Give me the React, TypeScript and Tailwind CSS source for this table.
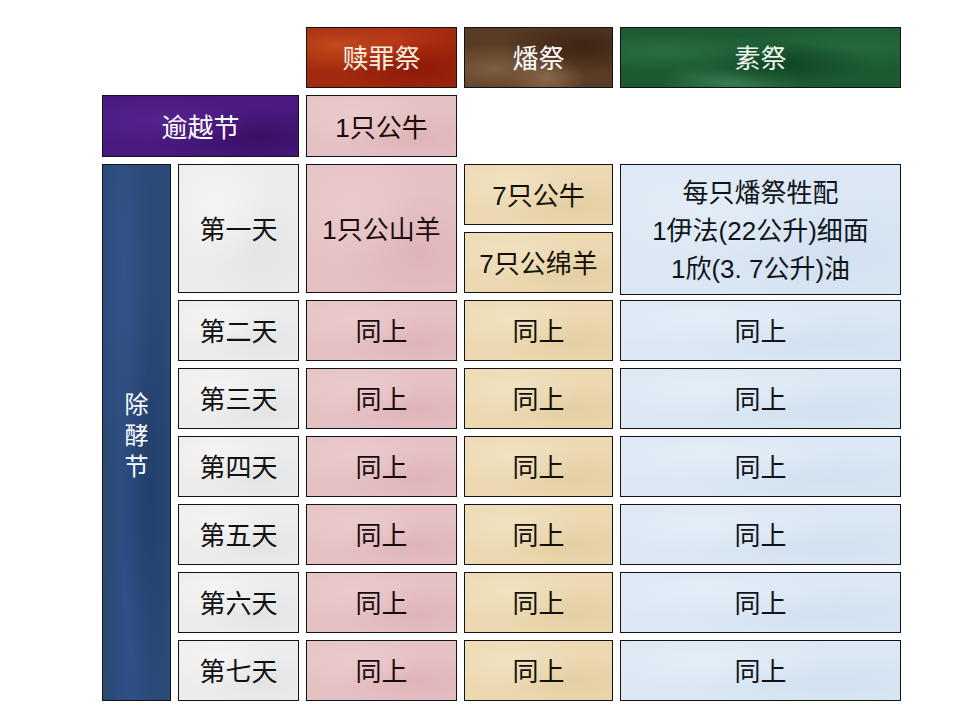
import React from "react";

const font = { fontFamily: '"Liberation Sans", "Noto Sans CJK SC", sans-serif' };

const box = "flex items-center justify-center border border-[#141414]";
const base = `${box} text-[26px] leading-none pt-[3px]`;

const red =
  "bg-[radial-gradient(ellipse_at_20%_30%,#c24a1c_0%,transparent_45%),radial-gradient(ellipse_at_75%_70%,#8e1a08_0%,transparent_50%),radial-gradient(ellipse_at_60%_20%,#b8361a_0%,transparent_40%)] bg-[#a22a0e] text-[#fbefe0]";
const brown =
  "bg-[radial-gradient(ellipse_at_20%_70%,#7e5e40_0%,transparent_45%),radial-gradient(ellipse_at_80%_30%,#3e2414_0%,transparent_50%),radial-gradient(ellipse_at_55%_85%,#8a6a4c_0%,transparent_35%)] bg-[#5a3c26] text-white";
const green =
  "bg-[radial-gradient(ellipse_at_15%_40%,#2a6e42_0%,transparent_40%),radial-gradient(ellipse_at_55%_60%,#0f4424_0%,transparent_45%),radial-gradient(ellipse_at_85%_30%,#266a3c_0%,transparent_40%),radial-gradient(ellipse_at_40%_90%,#3a7e50_0%,transparent_30%)] bg-[#1c5a32] text-[#eef6ee]";
const purple =
  "bg-[radial-gradient(ellipse_at_30%_40%,#54228c_0%,transparent_50%),radial-gradient(ellipse_at_80%_70%,#3a1066_0%,transparent_50%)] bg-[#4a1a80] text-white";
const blue =
  "bg-[radial-gradient(ellipse_at_30%_20%,#33548a_0%,transparent_40%),radial-gradient(ellipse_at_70%_60%,#22406c_0%,transparent_45%),radial-gradient(ellipse_at_40%_85%,#30508a_0%,transparent_40%)] bg-[#2b4a78] text-white";
const gray =
  "bg-[radial-gradient(ellipse_at_30%_30%,#f4f4f4_0%,transparent_50%),radial-gradient(ellipse_at_70%_70%,#e4e4e4_0%,transparent_50%)] bg-[#ececec] text-[#111]";
const pink =
  "bg-[radial-gradient(ellipse_at_30%_30%,#eacacd_0%,transparent_50%),radial-gradient(ellipse_at_75%_70%,#dfb4b8_0%,transparent_50%)] bg-[#e5c1c4] text-[#1a0a0a]";
const tan =
  "bg-[radial-gradient(ellipse_at_30%_30%,#f1e1c0_0%,transparent_50%),radial-gradient(ellipse_at_75%_70%,#e3cfa2_0%,transparent_50%)] bg-[#ecd9b2] text-[#141008]";
const lblue =
  "bg-[radial-gradient(ellipse_at_30%_30%,#e4edf7_0%,transparent_50%),radial-gradient(ellipse_at_75%_70%,#d2e0f0_0%,transparent_50%)] bg-[#dbe7f4] text-[#0f141a]";

const days = ["第二天", "第三天", "第四天", "第五天", "第六天", "第七天"];

export default function App() {
  return (
    <div className="w-[960px] h-[720px] bg-white overflow-hidden" style={font}>
      <div className="ml-[102px] pt-[27px] grid grid-cols-[69px_121px_151px_149px_281px] grid-rows-[61px_62px_129px_repeat(6,61px)] gap-[7px]">
        <div className="col-span-2" />
        <div className={`${base} ${red}`}>赎罪祭</div>
        <div className={`${base} ${brown}`}>燔祭</div>
        <div className={`${base} ${green}`}>素祭</div>

        <div className={`${base} ${purple} col-span-2`}>逾越节</div>
        <div className={`${base} ${pink}`}>1只公牛</div>
        <div className="col-span-2" />

        <div className={`${box} ${blue} row-span-7 flex-col text-[24px] leading-[31px] pt-[6px]`}>
          <span>除</span>
          <span>酵</span>
          <span>节</span>
        </div>
        <div className={`${base} ${gray}`}>第一天</div>
        <div className={`${base} ${pink}`}>1只公山羊</div>
        <div className="flex flex-col gap-[7px]">
          <div className={`${base} ${tan} h-[61px]`}>7只公牛</div>
          <div className={`${base} ${tan} h-[61px]`}>7只公绵羊</div>
        </div>
        <div className={`${box} ${lblue} flex-col text-[26px] leading-[38px] h-[131px] pt-[3px]`}>
          <span>每只燔祭牲配</span>
          <span>1伊法(22公升)细面</span>
          <span>1欣(3. 7公升)油</span>
        </div>

        {days.map((d) => (
          <React.Fragment key={d}>
            <div className={`${base} ${gray}`}>{d}</div>
            <div className={`${base} ${pink}`}>同上</div>
            <div className={`${base} ${tan}`}>同上</div>
            <div className={`${base} ${lblue}`}>同上</div>
          </React.Fragment>
        ))}
      </div>
    </div>
  );
}
